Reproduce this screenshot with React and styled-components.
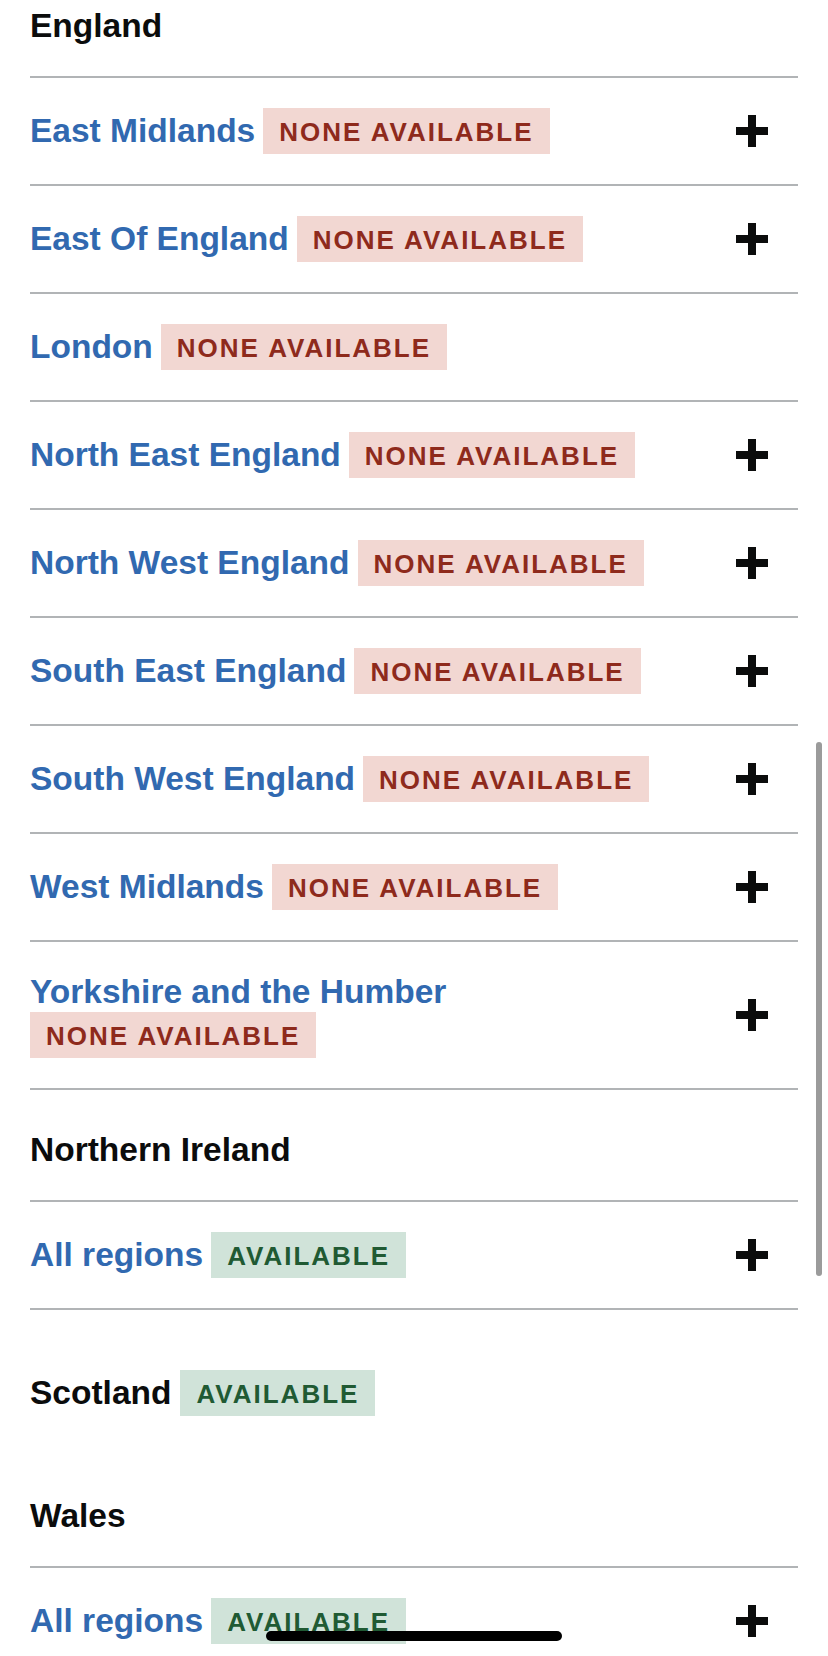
import React from 'react';
import styled, { createGlobalStyle } from 'styled-components';

const GlobalStyle = createGlobalStyle`
  html, body {
    margin: 0;
    padding: 0;
    background: #ffffff;
  }

  body {
    font-family: "Liberation Sans", Arial, sans-serif;
    overflow: hidden;
  }
`;

const Page = styled.main`
  position: relative;
  box-sizing: border-box;
  height: 1656px;
  padding: 0 30px;
  overflow: hidden;
`;

const NationTitle = styled.h2`
  display: flex;
  flex-wrap: wrap;
  align-items: center;
  gap: 0 9px;
  margin: 0;
  padding: ${(p) => p.$top}px 0 ${(p) => p.$bottom}px;
  font-size: 33.5px;
  line-height: 40px;
  font-weight: 700;
  color: #0b0c0c;
`;

const Accordion = styled.div`
  border-bottom: 2px solid #b1b4b6;
`;

const Row = styled.div`
  display: flex;
  align-items: center;
  padding: 30px 0;
  border-top: 2px solid #b1b4b6;
`;

const RowHeading = styled.div`
  flex: 1;
  display: flex;
  flex-wrap: wrap;
  align-items: center;
  gap: 0 8px;
  margin-right: 40px;
  min-height: 46px;
`;

const RegionName = styled.span`
  font-size: 33.5px;
  line-height: 40px;
  font-weight: 700;
  color: #3169b0;
`;

const tones = {
  red: { color: '#8e2a1c', background: '#f2d7d2' },
  green: { color: '#205a33', background: '#d0e3d9' },
};

const Tag = styled.strong`
  display: inline-block;
  padding: 10px 16px 8px;
  font-size: 26px;
  line-height: 28px;
  font-weight: 700;
  letter-spacing: 2px;
  text-transform: uppercase;
  color: ${(p) => tones[p.$tone].color};
  background: ${(p) => tones[p.$tone].background};
`;

const PlusWrap = styled.span`
  display: flex;
  width: 32px;
  height: 32px;
  margin-right: 30px;
`;

const Scrollbar = styled.div`
  position: absolute;
  left: 816px;
  top: 742px;
  width: 6px;
  height: 534px;
  border-radius: 3px;
  background: #9b9b9b;
`;

const HomeIndicator = styled.div`
  position: absolute;
  left: 266px;
  top: 1631px;
  width: 296px;
  height: 10px;
  border-radius: 5px;
  background: #000000;
`;

function PlusIcon() {
  return (
    <PlusWrap>
      <svg width="32" height="32" viewBox="0 0 32 32" aria-hidden="true">
        <rect x="0" y="12" width="32" height="8" fill="#0b0c0c" />
        <rect x="12" y="0" width="8" height="32" fill="#0b0c0c" />
      </svg>
    </PlusWrap>
  );
}

const status = {
  none: { label: 'None available', tone: 'red' },
  yes: { label: 'Available', tone: 'green' },
};

const nations = [
  {
    name: 'England',
    top: 6,
    bottom: 30,
    regions: [
      { name: 'East Midlands', status: 'none', more: true },
      { name: 'East Of England', status: 'none', more: true },
      { name: 'London', status: 'none', more: false },
      { name: 'North East England', status: 'none', more: true },
      { name: 'North West England', status: 'none', more: true },
      { name: 'South East England', status: 'none', more: true },
      { name: 'South West England', status: 'none', more: true },
      { name: 'West Midlands', status: 'none', more: true },
      { name: 'Yorkshire and the Humber', status: 'none', more: true },
    ],
  },
  {
    name: 'Northern Ireland',
    top: 40,
    bottom: 30,
    regions: [{ name: 'All regions', status: 'yes', more: true }],
  },
  {
    name: 'Scotland',
    top: 60,
    bottom: 40,
    status: 'yes',
    regions: [],
  },
  {
    name: 'Wales',
    top: 40,
    bottom: 30,
    regions: [{ name: 'All regions', status: 'yes', more: true }],
  },
];

function RegionRow({ region }) {
  const s = status[region.status];
  return (
    <Row>
      <RowHeading>
        <RegionName>{region.name}</RegionName>
        <Tag $tone={s.tone}>{s.label}</Tag>
      </RowHeading>
      {region.more && <PlusIcon />}
    </Row>
  );
}

export default function App() {
  return (
    <>
      <GlobalStyle />
      <Page>
        {nations.map((nation) => (
          <section key={nation.name}>
            <NationTitle $top={nation.top} $bottom={nation.bottom}>
              <span>{nation.name}</span>
              {nation.status && (
                <Tag $tone={status[nation.status].tone}>{status[nation.status].label}</Tag>
              )}
            </NationTitle>
            {nation.regions.length > 0 && (
              <Accordion>
                {nation.regions.map((region) => (
                  <RegionRow key={region.name} region={region} />
                ))}
              </Accordion>
            )}
          </section>
        ))}
        <Scrollbar />
        <HomeIndicator />
      </Page>
    </>
  );
}
